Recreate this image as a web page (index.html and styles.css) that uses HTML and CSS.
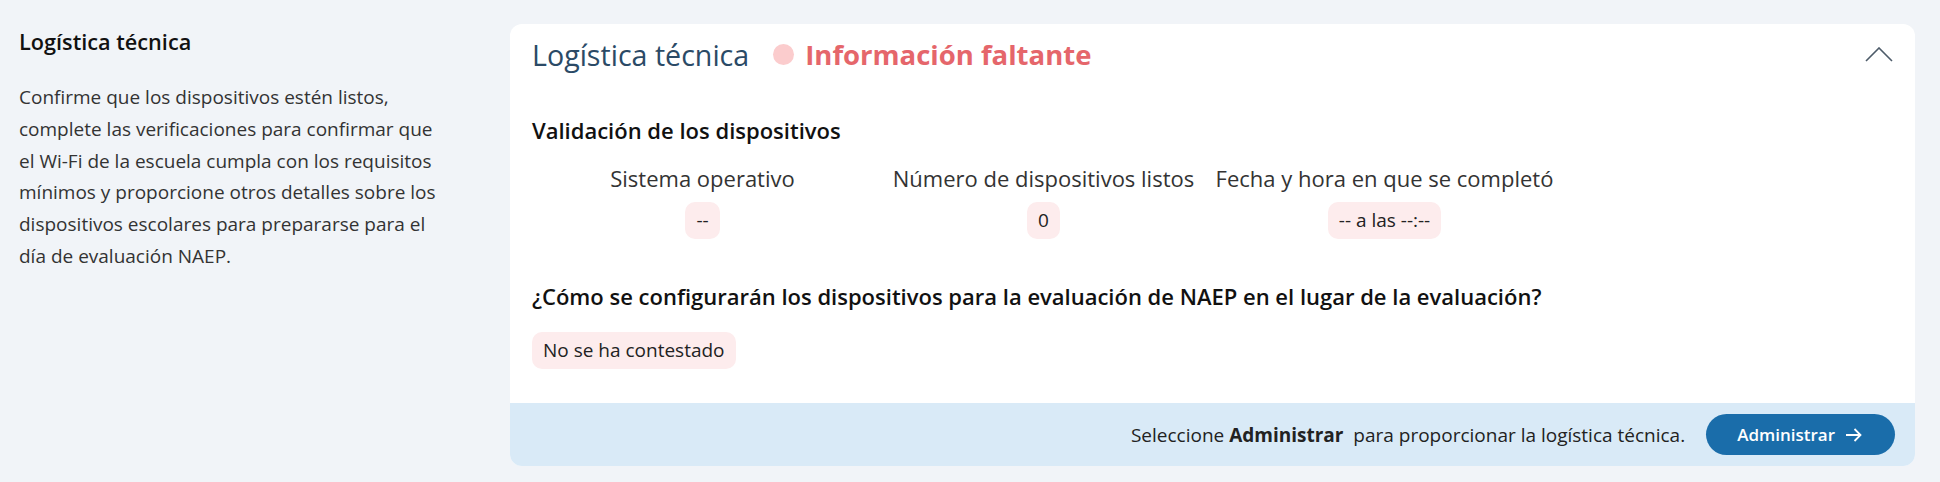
FILE: index.html
```html
<!DOCTYPE html>
<html lang="es">
<head>
    <meta charset="UTF-8">
    <meta name="viewport" content="width=device-width, initial-scale=1.0">
    <title>Logística técnica</title>
    <link rel="stylesheet" href="styles.css">
</head>
<body>
<div class="page">
    <aside class="intro">
        <h2>Logística técnica</h2>
        <p>Confirme que los dispositivos estén listos, complete las verificaciones para confirmar que el Wi-Fi de la escuela cumpla con los requisitos mínimos y proporcione otros detalles sobre los dispositivos escolares para prepararse para el día de evaluación NAEP.</p>
    </aside>

    <section class="card">
        <div class="card-body">
            <div class="card-header">
                <h3 class="card-title">Logística técnica</h3>
                <span class="status">
                    <span class="status-dot"></span>
                    Información faltante
                </span>
                <button class="toggle" type="button" aria-label="Contraer">
                    <svg width="28" height="15" viewBox="0 0 28 15">
                        <path d="M1 14 L14 1 L27 14" fill="none" stroke="#4d5b69" stroke-width="1.6"/>
                    </svg>
                </button>
            </div>

            <h4 class="subtitle">Validación de los dispositivos</h4>
            <div class="devices">
                <div class="device-col">
                    <div class="device-label">Sistema operativo</div>
                    <span class="pill">--</span>
                </div>
                <div class="device-col">
                    <div class="device-label">Número de dispositivos listos</div>
                    <span class="pill">0</span>
                </div>
                <div class="device-col">
                    <div class="device-label">Fecha y hora en que se completó</div>
                    <span class="pill">-- a las --:--</span>
                </div>
            </div>

            <h4 class="question">¿Cómo se configurarán los dispositivos para la evaluación de NAEP en el lugar de la evaluación?</h4>
            <span class="pill pill-left">No se ha contestado</span>
        </div>

        <div class="card-footer">
            <span class="footer-text">Seleccione <b>Administrar</b>&nbsp; para proporcionar la logística técnica.</span>
            <button class="btn" type="button">
                Administrar
                <svg class="arrow" width="17" height="14" viewBox="0 0 17 14">
                    <path d="M1 7 H15.5 M9.5 1 L15.5 7 L9.5 13" fill="none" stroke="#fff" stroke-width="1.8"/>
                </svg>
            </button>
        </div>
    </section>
</div>
</body>
</html>
```

FILE: styles.css
```css
body {
    margin: 0;
    background-color: #f1f4f8;
    font-family: "Open Sans", Arial, sans-serif;
    color: #222;
}
.page {
    display: flex;
    align-items: flex-start;
    padding: 24px 25px 16px 19px;
}
.intro {
    width: 430px;
    flex: 0 0 430px;
    margin-right: 61px;
}
.intro h2 {
    margin: 4px 0 0;
    font-size: 21.7px;
    font-weight: 600;
    color: #111;
    line-height: 28px;
}
.intro p {
    margin: 26px 0 0;
    font-size: 19px;
    line-height: 31.8px;
    color: #333;
}
.card {
    flex: 1;
    background: #fff;
    border-radius: 12px;
    overflow: hidden;
}
.card-body {
    padding: 8px 22px 34px 22px;
}
.card-header {
    display: flex;
    align-items: center;
    height: 44px;
}
.card-title {
    margin: 0;
    font-size: 28.6px;
    font-weight: 400;
    color: #2b4a66;
}
.status {
    display: flex;
    align-items: center;
    margin-left: 24px;
    font-size: 27.5px;
    font-weight: 700;
    color: #e5666b;
}
.status-dot {
    width: 21px;
    height: 21px;
    border-radius: 50%;
    background: #fbcccd;
    margin-right: 11px;
}
.toggle {
    margin-left: auto;
    background: none;
    border: none;
    padding: 0;
    cursor: pointer;
    display: flex;
}
.subtitle {
    margin: 39px 0 0;
    font-size: 22px;
    font-weight: 600;
    line-height: 30px;
    color: #111;
}
.devices {
    display: grid;
    grid-template-columns: repeat(3, 341px);
    margin-top: 18px;
}
.device-col {
    display: flex;
    flex-direction: column;
    align-items: center;
}
.device-label {
    font-size: 22px;
    color: #333;
    line-height: 30px;
}
.pill {
    display: inline-block;
    background: #fdeced;
    border-radius: 10px;
    padding: 6px 11px;
    font-size: 19px;
    line-height: 25px;
    color: #222;
}
.device-col .pill {
    margin-top: 9px;
}
.question {
    margin: 42px 0 0;
    font-size: 22px;
    font-weight: 600;
    line-height: 30px;
    color: #111;
}
.pill-left {
    margin-top: 21px;
}
.card-footer {
    display: flex;
    align-items: center;
    justify-content: flex-end;
    background: #d9eaf7;
    height: 63px;
    padding: 0 20px;
}
.footer-text {
    font-size: 19px;
    color: #222;
    margin-right: 21px;
}
.footer-text b {
    font-weight: 700;
}
.btn {
    display: flex;
    align-items: center;
    background: #1a6daa;
    color: #fff;
    border: none;
    border-radius: 21px;
    height: 41px;
    padding: 0 33px 0 31px;
    font-family: inherit;
    font-size: 17px;
    font-weight: 600;
    cursor: pointer;
}
.arrow {
    margin-left: 10px;
}
```
